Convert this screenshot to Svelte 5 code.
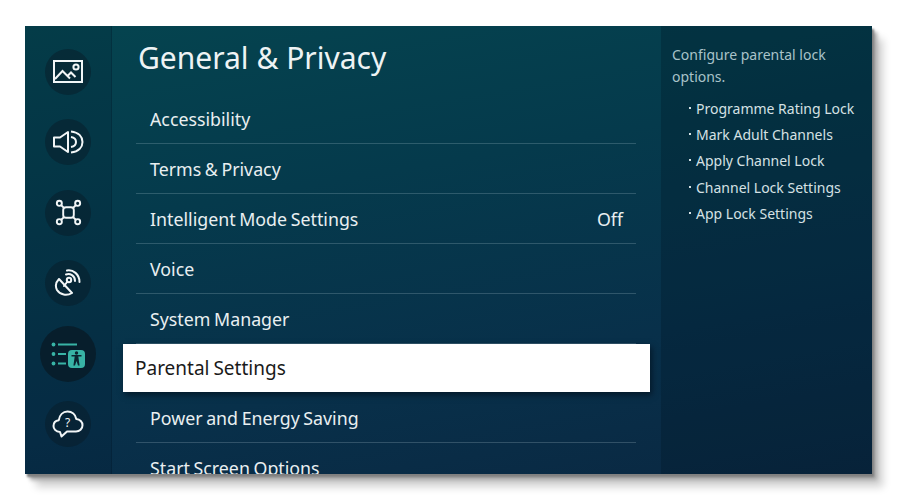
<script>
  const menu = [
    { label: 'Accessibility' },
    { label: 'Terms & Privacy' },
    { label: 'Intelligent Mode Settings', value: 'Off' },
    { label: 'Voice' },
    { label: 'System Manager' },
    { label: 'Parental Settings', selected: true },
    { label: 'Power and Energy Saving' },
    { label: 'Start Screen Options' }
  ];
  const features = [
    'Programme Rating Lock',
    'Mark Adult Channels',
    'Apply Channel Lock',
    'Channel Lock Settings',
    'App Lock Settings'
  ];
</script>

<div class="page">
  <div class="tv">
    <nav class="rail">
      <div class="disc">
        <svg width="32" height="26" viewBox="0 0 32 26" fill="none" stroke="#f2f6f7" stroke-width="2">
          <rect x="2" y="2" width="28" height="21" />
          <path d="M3 20 L10.5 12 L18 19.5 M15.5 17 L19 13.5 L23.5 18" />
          <circle cx="24" cy="8" r="2.6" />
        </svg>
      </div>
      <div class="disc">
        <svg width="32" height="24" viewBox="0 0 32 24" fill="none" stroke="#f2f6f7" stroke-width="2" stroke-linejoin="round">
          <path d="M2 7.5 H8 L16 2 V22 L8 16.5 H2 Z" />
          <path d="M19 1.5 C27 2.5 30.5 7 30.5 12 C30.5 17 27 21.5 19 22.5" />
          <path d="M19 7 C22 7.5 24 9.5 24 12 C24 14.5 22 16.5 19 17" />
        </svg>
      </div>
      <div class="disc">
        <svg width="27" height="27" viewBox="0 0 28 28" fill="none" stroke="#f2f6f7" stroke-width="2">
          <rect x="8.5" y="8.5" width="11" height="11" rx="3" />
          <circle cx="4.5" cy="4.5" r="2.6" />
          <circle cx="23.5" cy="4.5" r="2.6" />
          <circle cx="4.5" cy="23.5" r="2.6" />
          <circle cx="23.5" cy="23.5" r="2.6" />
          <path d="M6.5 6.5 L9.5 9.5 M21.5 6.5 L18.5 9.5 M6.5 21.5 L9.5 18.5 M21.5 21.5 L18.5 18.5" />
        </svg>
      </div>
      <div class="disc">
        <svg width="28" height="28" viewBox="0 0 28 28" fill="none" stroke="#f2f6f7" stroke-width="2" stroke-linecap="round">
          <path d="M5 10 L18 24 C13 27 6 26 3 21 C1 17 2 13 5 10 Z" stroke-linejoin="round" />
          <circle cx="15" cy="11" r="2.2" />
          <path d="M13.5 12.5 L10 17" />
          <path d="M12 5.5 C16 4 21 6.5 21 12" />
          <path d="M13 1.5 C19 0.5 25.5 5 25.5 13" />
        </svg>
      </div>
      <div class="disc disc--active">
        <svg width="34" height="28" viewBox="0 0 34 28" fill="none">
          <g fill="#38b3a5">
            <circle cx="2.5" cy="4.5" r="1.9" />
            <circle cx="2.5" cy="14" r="1.9" />
            <circle cx="2.5" cy="23.5" r="1.9" />
            <rect x="7" y="3.5" width="19" height="2" />
            <rect x="7" y="13" width="8" height="2" />
            <rect x="7" y="22.5" width="8" height="2" />
            <rect x="17" y="10" width="17" height="18" rx="4" />
          </g>
          <g fill="#0b2430">
            <circle cx="25.5" cy="13" r="1.7" />
            <path d="M20.5 15 H30.5 V16.4 H27.3 L28.6 25.5 H27 L25.5 21 L24 25.5 H22.4 L23.7 16.4 H20.5 Z" />
          </g>
        </svg>
      </div>
      <div class="disc">
        <svg width="32" height="28" viewBox="0 0 32 28" fill="none" stroke="#f2f6f7" stroke-width="2" stroke-linejoin="round">
          <path d="M8 22 C3.5 22 1.5 18.5 1.5 16 C1.5 12.5 4 10.5 6.8 10.2 C7.5 5 11 1.5 15.5 1.5 C20 1.5 23.5 4.5 24.3 9 C28 9.2 30.5 12 30.5 15.2 C30.5 19 27.5 21.5 24 21.5 H15 L9.5 26.5 Z" />
          <text x="15.5" y="16.5" class="q">?</text>
        </svg>
      </div>
    </nav>

    <main class="content">
      <h1>General &amp; Privacy</h1>
      <ul class="menu">
        {#each menu as item}
          <li class="row" class:row--selected={item.selected}>
            <span>{item.label}</span>
            {#if item.value}<span>{item.value}</span>{/if}
          </li>
        {/each}
      </ul>
    </main>

    <aside class="help">
      <p>Configure parental lock options.</p>
      <ul>
        {#each features as feature}
          <li>{feature}</li>
        {/each}
      </ul>
    </aside>
  </div>
</div>

<style>
  :global(body) {
    background: #fff;
  }

  .page {
    width: 900px;
    height: 500px;
    padding: 26px 0 0 25px;
    box-sizing: border-box;
    font-family: "Noto Sans", "Open Sans", sans-serif;
  }

  .tv {
    width: 847px;
    height: 448px;
    display: flex;
    overflow: hidden;
    background: linear-gradient(170deg, #05444f 0%, #053a4c 35%, #08304a 70%, #0a2842 100%);
    box-shadow: 2px 3px 2px #808080, 5px 6px 4px #a8a8a8, 11px 13px 8px #d2d2d2;
    color: #e9eff1;
  }

  .rail {
    width: 87px;
    flex: none;
    box-sizing: border-box;
    padding-top: 23px;
    display: flex;
    flex-direction: column;
    align-items: center;
    gap: 24.4px;
    background: rgba(0, 20, 35, 0.16);
    border-right: 1px solid rgba(0, 20, 35, 0.25);
  }

  .disc {
    width: 46px;
    height: 46px;
    border-radius: 50%;
    background: rgba(8, 28, 40, 0.5);
    display: flex;
    align-items: center;
    justify-content: center;
  }

  .disc--active {
    width: 56px;
    height: 56px;
    margin: -5px 0;
    background: rgba(8, 26, 36, 0.75);
  }

  .q {
    font-size: 12px;
    fill: #eef4f5;
    stroke: none;
    text-anchor: middle;
    font-family: "Noto Sans", sans-serif;
  }

  .content {
    width: 549px;
    flex: none;
    box-sizing: border-box;
    padding: 10px 0 0 26px;
    overflow: hidden;
  }

  h1 {
    margin: 0 0 14px;
    font-size: 30px;
    line-height: 44px;
    font-weight: 400;
    color: #eef3f4;
  }

  .menu {
    list-style: none;
    margin: 0;
    padding: 0;
    width: 500px;
    margin-left: -2px;
  }

  .row {
    height: 50px;
    box-sizing: border-box;
    display: flex;
    align-items: center;
    justify-content: space-between;
    padding: 0 13px 0 14px;
    font-size: 17.8px;
    word-spacing: -1px;
    border-bottom: 1px solid rgba(190, 215, 225, 0.22);
    color: #e9eff1;
  }

  .row--selected {
    width: 527px;
    height: 48px;
    margin: 0 0 1px -13px;
    padding-left: 12px;
    background: #fff;
    color: #1a1a1a;
    font-size: 19px;
    word-spacing: -1px;
    border-bottom: none;
    box-shadow: 2px 3px 6px rgba(0, 10, 20, 0.6);
  }

  .help {
    flex: 1;
    box-sizing: border-box;
    padding: 18px 10px 0 11px;
    background: rgba(0, 20, 35, 0.28);
    font-size: 14px;
    color: #a9c3c9;
  }

  .help p {
    margin: 0 0 8px;
    line-height: 22px;
  }

  .help ul {
    list-style: none;
    margin: 0;
    padding: 0 0 0 24px;
    color: #d5e1e4;
  }

  .help li {
    position: relative;
    line-height: 26.2px;
    white-space: nowrap;
  }

  .help li::before {
    content: "";
    position: absolute;
    left: -7px;
    top: 11px;
    width: 2px;
    height: 2px;
    background: #d5e1e4;
  }
</style>
